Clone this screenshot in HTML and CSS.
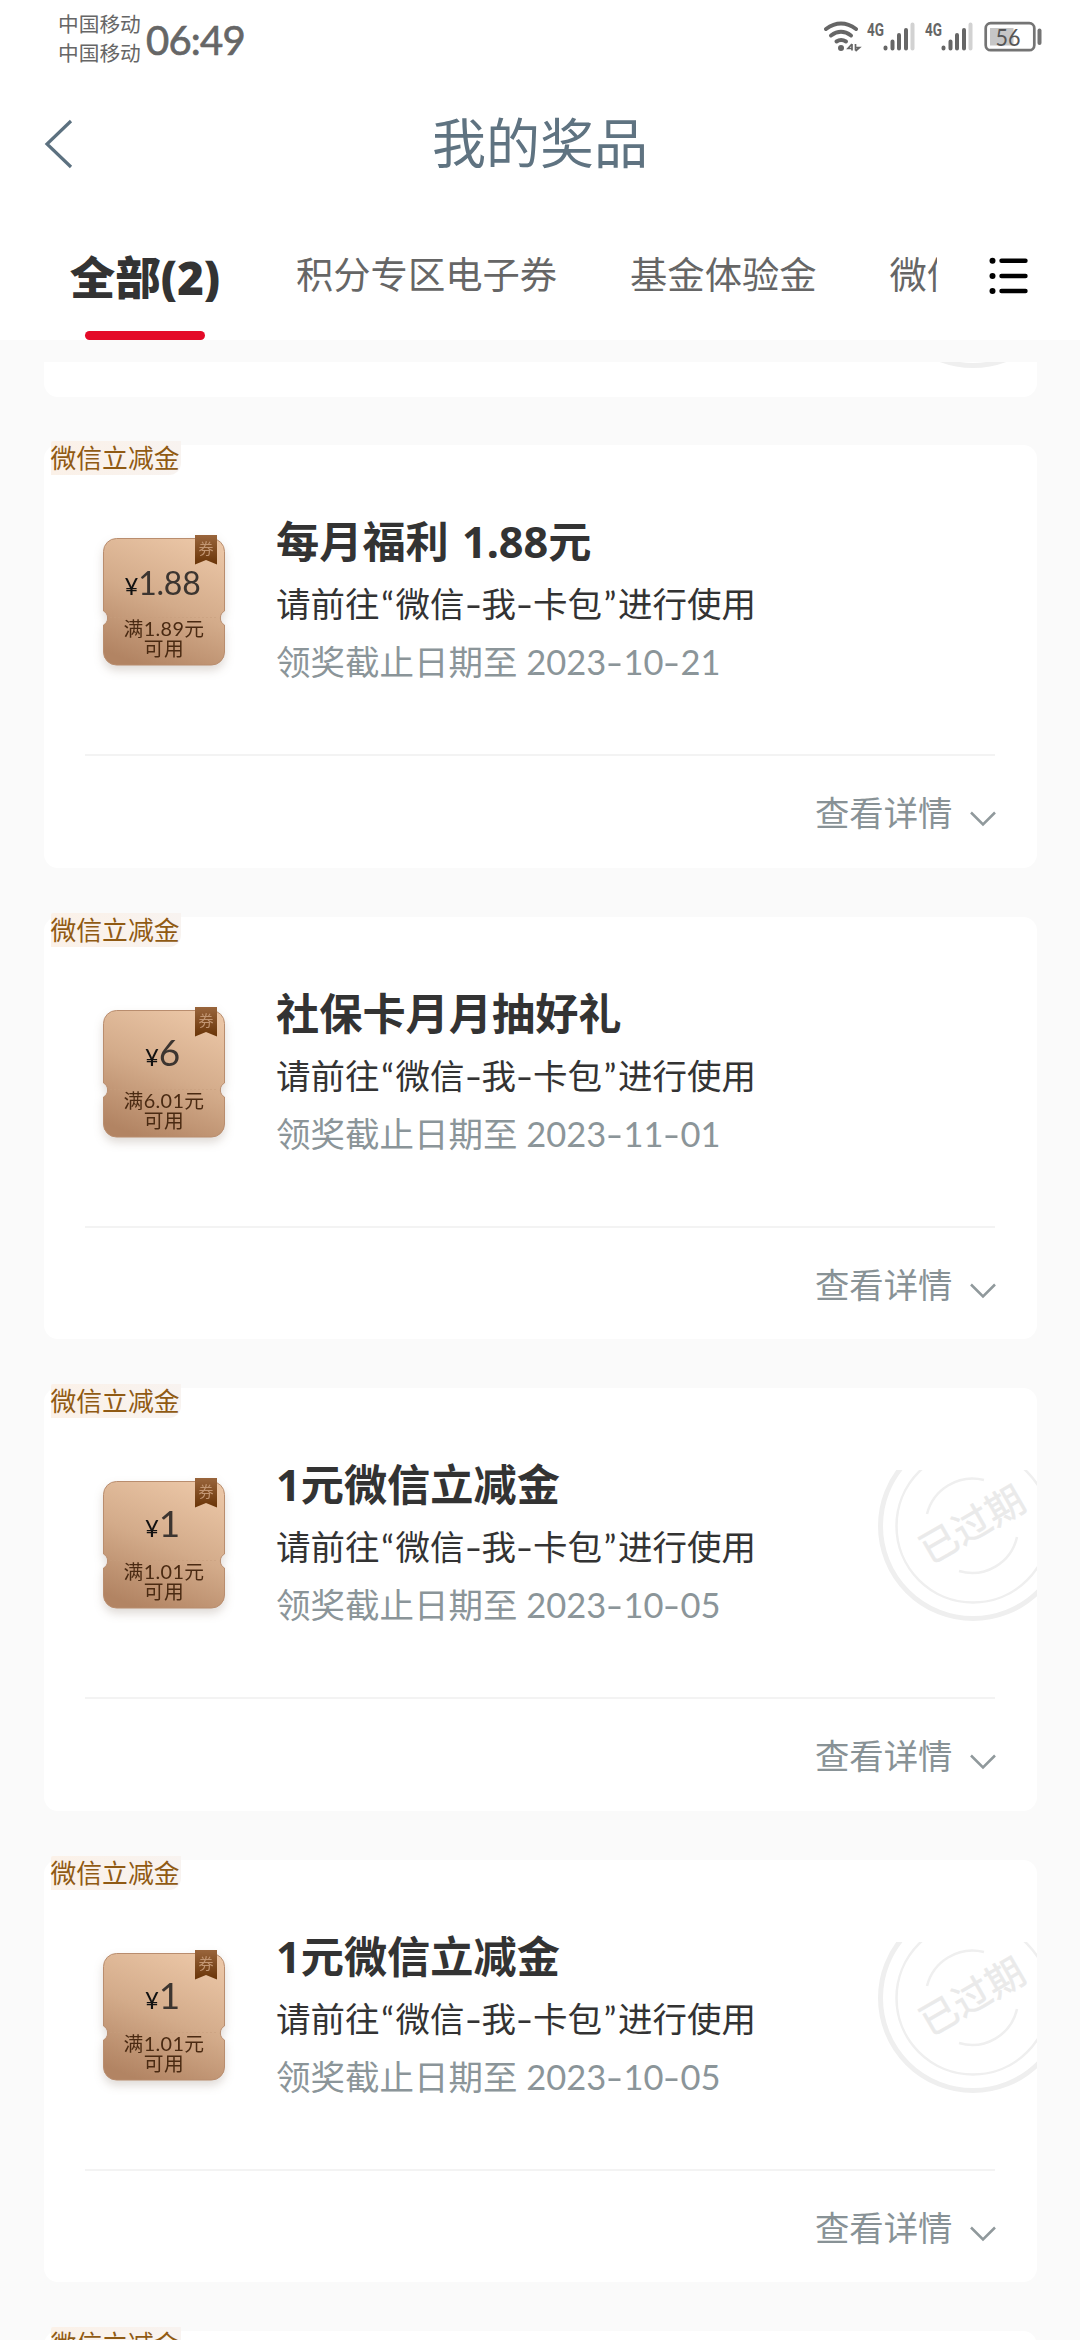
FILE: index.html
```html
<!DOCTYPE html>
<html lang="zh-CN">
<head>
<meta charset="utf-8">
<title>我的奖品</title>
<link rel="stylesheet" href="styles.css">
</head>
<body>
<svg class="defs" width="0" height="0" aria-hidden="true">
  <defs>
    <linearGradient id="ticket-fill" x1="0.7" y1="0" x2="0.3" y2="1">
      <stop offset="0" stop-color="#eac5a5"/>
      <stop offset="0.5" stop-color="#d3ab8a"/>
      <stop offset="1" stop-color="#b28463"/>
    </linearGradient>
    <linearGradient id="ribbon-fill" x1="0" y1="0" x2="0" y2="1">
      <stop offset="0" stop-color="#99653c"/>
      <stop offset="1" stop-color="#693407"/>
    </linearGradient>
    <symbol id="ticket" viewBox="0 0 124 134">
      <path d="M14.500 3.500H109.500A13 13 0 0 1 122.500 16.500V76A8 8 0 0 0 122.500 90V117A13 13 0 0 1 109.500 130H14.500A13 13 0 0 1 1.500 117V90A8 8 0 0 0 1.500 76V16.500A13 13 0 0 1 14.500 3.500Z" fill="url(#ticket-fill)" stroke="#b98d6e" stroke-width="1"/>
      <path d="M8 82.500H116" stroke="#c79e7d" stroke-width="1" stroke-dasharray="2 2" opacity=".5"/>
      <path d="M93 0H115V29.500L104 25L93 29.500Z" fill="url(#ribbon-fill)"/>
      <text x="104" y="19" class="ribbon-text">券</text>
    </symbol>
    <symbol id="rings" viewBox="0 0 192 192">
      <g fill="none" stroke="#efefef">
        <circle cx="96" cy="96" r="92.500" stroke-width="5"/>
        <circle cx="96" cy="96" r="76.500" stroke-width="2.500"/>
        <path d="M50 84A47 47 0 0 1 107 50" stroke-width="2.500"/>
        <path d="M140 107A46 46 0 0 1 82 141" stroke-width="2.500"/>
      </g>
      <text x="96" y="108" class="stamp-text" transform="rotate(-30 96 96)">已过期</text>
    </symbol>
    <symbol id="chevron" viewBox="0 0 28 18">
      <path d="M2 2.500L14 14.500L26 2.500" fill="none" stroke="#90999c" stroke-width="2.500"/>
    </symbol>
  </defs>
</svg>

<header class="status">
  <div class="carriers"><span>中国移动</span><span>中国移动</span></div>
  <div class="clock">06:49</div>
  <svg class="status-icons" width="222" height="36" viewBox="0 0 222 36">
    <g fill="none" stroke="#666" stroke-width="4" stroke-linecap="round">
      <path d="M5 10Q20 -1 35 10"/>
      <path d="M10 16.500Q20 9 30 16.500"/>
      <path d="M15.500 22.500Q20 19.500 25 22.500"/>
    </g>
    <circle cx="20" cy="29" r="3" fill="#666"/>
    <path d="M31 25V31.500M34.500 25V31.500M31 25L27 29.500H31M34.500 28.500H38.500L34.500 32" fill="none" stroke="#666" stroke-width="1.700"/>
    <text x="46" y="16.500" class="net" textLength="17" lengthAdjust="spacingAndGlyphs">4G</text>
    <text x="104" y="16.500" class="net" textLength="17" lengthAdjust="spacingAndGlyphs">4G</text>
    <g fill="none" stroke="#666" stroke-width="4" stroke-linecap="round">
      <path d="M64.500 28.500V29.500M71.500 22.500V29.500M78 16V29.500M85 11V29.500"/>
      <path d="M122.500 28.500V29.500M129.500 22.500V29.500M136 16V29.500M143 11V29.500"/>
      <path d="M91.500 5.500V29.500M149.500 5.500V29.500" stroke="#d2d2d2"/>
    </g>
    <rect x="164.700" y="4.200" width="48.600" height="27" rx="5" fill="none" stroke="#747474" stroke-width="2.700"/>
    <rect x="169" y="9" width="23.500" height="17.500" fill="#c6c6c6"/>
    <path d="M218.500 11.500V24" stroke="#747474" stroke-width="4" stroke-linecap="round"/>
    <text x="187" y="26.500" class="battery" textLength="25" lengthAdjust="spacingAndGlyphs">56</text>
  </svg>
</header>

<nav class="titlebar">
  <svg width="32" height="52" viewBox="0 0 32 52"><path d="M28 3L4 26L28 49" fill="none" stroke="#5c7180" stroke-width="3.200"/></svg>
  <h1>我的奖品</h1>
</nav>

<div class="tabs">
  <div class="tab-list">
    <div class="tab active">全部(2)</div>
    <div class="tab">积分专区电子券</div>
    <div class="tab">基金体验金</div>
    <div class="tab">微信立减金</div>
  </div>
  <svg class="menu" width="42" height="40" viewBox="0 0 42 40">
    <path d="M13.500 4.700H37.500M13.500 20H37.500M13.500 35H37.500" stroke="#000" stroke-width="4.400" stroke-linecap="round"/>
    <circle cx="4.500" cy="4.700" r="3"/><circle cx="4.500" cy="20" r="3"/><circle cx="4.500" cy="35" r="3"/>
  </svg>
</div>

<main class="list">
  <section class="card tail">
    <svg class="rings" width="192" height="192"><use href="#rings"/></svg>
  </section>

  <section class="card">
    <span class="tag">微信立减金</span>
    <div class="body">
      <div class="ticket">
        <svg width="124" height="134"><use href="#ticket"/></svg>
        <div class="face"><p class="amount"><i>¥</i>1.88</p><p class="rule">满1.89元<br>可用</p></div>
      </div>
      <div class="info">
        <h2>每月福利 1.88元</h2>
        <p class="how">请前往<q>“</q>微信<b>-</b>我<b>-</b>卡包<q>”</q>进行使用</p>
        <p class="date">领奖截止日期至 2023<b>-</b>10<b>-</b>21</p>
      </div>
    </div>
    <div class="more">查看详情<svg width="28" height="18"><use href="#chevron"/></svg></div>
  </section>

  <section class="card">
    <span class="tag">微信立减金</span>
    <div class="body">
      <div class="ticket">
        <svg width="124" height="134"><use href="#ticket"/></svg>
        <div class="face"><p class="amount whole"><i>¥</i>6</p><p class="rule">满6.01元<br>可用</p></div>
      </div>
      <div class="info">
        <h2>社保卡月月抽好礼</h2>
        <p class="how">请前往<q>“</q>微信<b>-</b>我<b>-</b>卡包<q>”</q>进行使用</p>
        <p class="date">领奖截止日期至 2023<b>-</b>11<b>-</b>01</p>
      </div>
    </div>
    <div class="more">查看详情<svg width="28" height="18"><use href="#chevron"/></svg></div>
  </section>

  <section class="card">
    <span class="tag">微信立减金</span>
    <div class="stamp"><svg class="rings" width="192" height="192"><use href="#rings"/></svg></div>
    <div class="body">
      <div class="ticket">
        <svg width="124" height="134"><use href="#ticket"/></svg>
        <div class="face"><p class="amount whole"><i>¥</i>1</p><p class="rule">满1.01元<br>可用</p></div>
      </div>
      <div class="info">
        <h2>1元微信立减金</h2>
        <p class="how">请前往<q>“</q>微信<b>-</b>我<b>-</b>卡包<q>”</q>进行使用</p>
        <p class="date">领奖截止日期至 2023<b>-</b>10<b>-</b>05</p>
      </div>
    </div>
    <div class="more">查看详情<svg width="28" height="18"><use href="#chevron"/></svg></div>
  </section>

  <section class="card">
    <span class="tag">微信立减金</span>
    <div class="stamp"><svg class="rings" width="192" height="192"><use href="#rings"/></svg></div>
    <div class="body">
      <div class="ticket">
        <svg width="124" height="134"><use href="#ticket"/></svg>
        <div class="face"><p class="amount whole"><i>¥</i>1</p><p class="rule">满1.01元<br>可用</p></div>
      </div>
      <div class="info">
        <h2>1元微信立减金</h2>
        <p class="how">请前往<q>“</q>微信<b>-</b>我<b>-</b>卡包<q>”</q>进行使用</p>
        <p class="date">领奖截止日期至 2023<b>-</b>10<b>-</b>05</p>
      </div>
    </div>
    <div class="more">查看详情<svg width="28" height="18"><use href="#chevron"/></svg></div>
  </section>

  <section class="card">
    <span class="tag">微信立减金</span>
  </section>
</main>
</body>
</html>
```
FILE: styles.css
```css
* { box-sizing: border-box; margin: 0; padding: 0; }
html, body { height: 2340px; overflow: hidden; }
body {
  display: flex;
  flex-direction: column;
  width: 1080px;
  background: #fafafa;
  color: #333;
  font-family: Lato, "Noto Sans CJK SC", sans-serif;
}
svg { display: block; flex: none; }
.defs { position: absolute; }

/* Status bar */
.status {
  flex: none;
  display: flex;
  height: 84px;
  padding-left: 58px;
  background: #fff;
  color: #666;
}
.carriers {
  display: flex;
  flex-direction: column;
  padding-top: 10px;
  width: 88px;
  font-size: 20.700px;
  line-height: 29px;
}
.clock {
  width: 678px;
  padding-top: 15px;
  font-size: 40px;
  line-height: 50px;
  letter-spacing: -0.800px;
  -webkit-text-stroke: 0.700px #666;
}
.status-icons { margin-top: 19px; margin-left: -3px; }
.net { font: 700 18px Roboto, sans-serif; fill: #666; }
.battery { font: 24px Lato, sans-serif; fill: #555; text-anchor: middle; }

/* Title bar */
.titlebar {
  flex: none;
  display: grid;
  grid-template-columns: 120px 1fr 120px;
  align-items: center;
  height: 120px;
  background: #fff;
  color: #5f7381;
}
.titlebar svg { margin-left: 43px; }
.titlebar h1 { font-size: 54px; font-weight: 400; line-height: 80px; text-align: center; }

/* Tabs */
.tabs {
  flex: none;
  display: flex;
  height: 136px;
  padding: 0 50px 0 67px;
  background: #fff;
  justify-content: space-between;
}
.tab-list {
  display: flex;
  gap: 73px;
  width: 870px;
  overflow: hidden;
}
.tab {
  flex: none;
  padding-top: 44px;
  font-size: 37.300px;
  line-height: 54px;
  color: #666;
  white-space: nowrap;
}
.tab.active {
  display: flex;
  flex-direction: column;
  align-items: center;
  justify-content: space-between;
  width: 156px;
  padding-top: 46px;
  font-size: 45.500px;
  font-weight: 800;
  font-family: "Open Sans", "Noto Sans CJK SC", sans-serif;
  color: #333;
}
.tab.active::after {
  content: "";
  width: 120px;
  height: 9px;
  border-radius: 5px;
  background: #e40a28;
}
.menu { margin: 52px 0 0; }

/* Prize cards */
.list { margin-top: 22px; padding: 0 43.500px; overflow: hidden; }
.card {
  position: relative;
  height: 422.600px;
  margin-bottom: 49px;
  border-radius: 14px;
  background: #fff;
}
.card.tail { height: 35px; border-radius: 0 0 14px 14px; overflow: hidden; margin-bottom: 48px; }
.card.tail .rings { margin: -185px 0 0 833px; }
.tag {
  position: absolute;
  top: -4px;
  left: 7px;
  width: 130px;
  height: 34px;
  border-radius: 2px 0 12px 0;
  background: linear-gradient(90deg, #fbf1e8, #f8f3f0);
  font-size: 25.800px;
  line-height: 35px;
  color: #905a13;
  white-space: nowrap;
}
.stamp {
  position: absolute;
  top: 82px;
  right: 0;
  width: 162px;
  height: 156px;
  overflow: hidden;
}
.stamp .rings { margin: -40px 0 0 2px; }
.stamp-text { font: 400 38px "Noto Sans CJK SC", sans-serif; fill: #eaeaea; stroke: #eaeaea; stroke-width: 0.500px; text-anchor: middle; }
.body {
  display: flex;
  height: 311px;
  margin: 0 41.500px;
  border-bottom: 2px solid #f3f3f3;
}
.ticket {
  display: grid;
  width: 124px;
  height: 134px;
  margin: 90px 50px 0 17px;
  filter: drop-shadow(0 5px 5px rgba(80, 50, 30, .18));
}
.ticket > * { grid-area: 1 / 1; }
.ribbon-text { font: 15px "Noto Sans CJK SC", sans-serif; fill: #c29673; text-anchor: middle; }
.face { text-align: center; padding-top: 28px; white-space: nowrap; }
.amount { font-size: 32px; line-height: 40px; height: 55px; color: #3c3530; letter-spacing: -0.200px; padding-right: 3px; }
.amount i { font-size: 24px; font-style: normal; color: #111; }
.amount.whole { font-size: 37px; line-height: 34px; }
.rule { font-size: 19.800px; line-height: 20px; letter-spacing: 0.400px; color: #4a2a12; }
.info { padding-top: 68px; white-space: nowrap; }
h2 { font-size: 43.200px; line-height: 58px; font-weight: 700; font-family: "Noto Sans", "Noto Sans CJK SC", sans-serif; color: #333; word-spacing: 2px; }
.how { margin-top: 5px; font-size: 34.500px; line-height: 56px; }
.date { margin-top: 2px; font-size: 34.500px; line-height: 56px; color: #8b9599; }
.info q { display: inline-block; width: 16px; text-align: center; quotes: none; }
.info b { display: inline-block; width: 17px; text-align: center; font-weight: 400; transform: scaleX(1.400); }
.more {
  display: flex;
  align-items: center;
  justify-content: flex-end;
  gap: 16px;
  height: 110px;
  padding-right: 40px;
  font-size: 34.400px;
  color: #889296;
}
.more svg { margin-top: 16px; }
```
